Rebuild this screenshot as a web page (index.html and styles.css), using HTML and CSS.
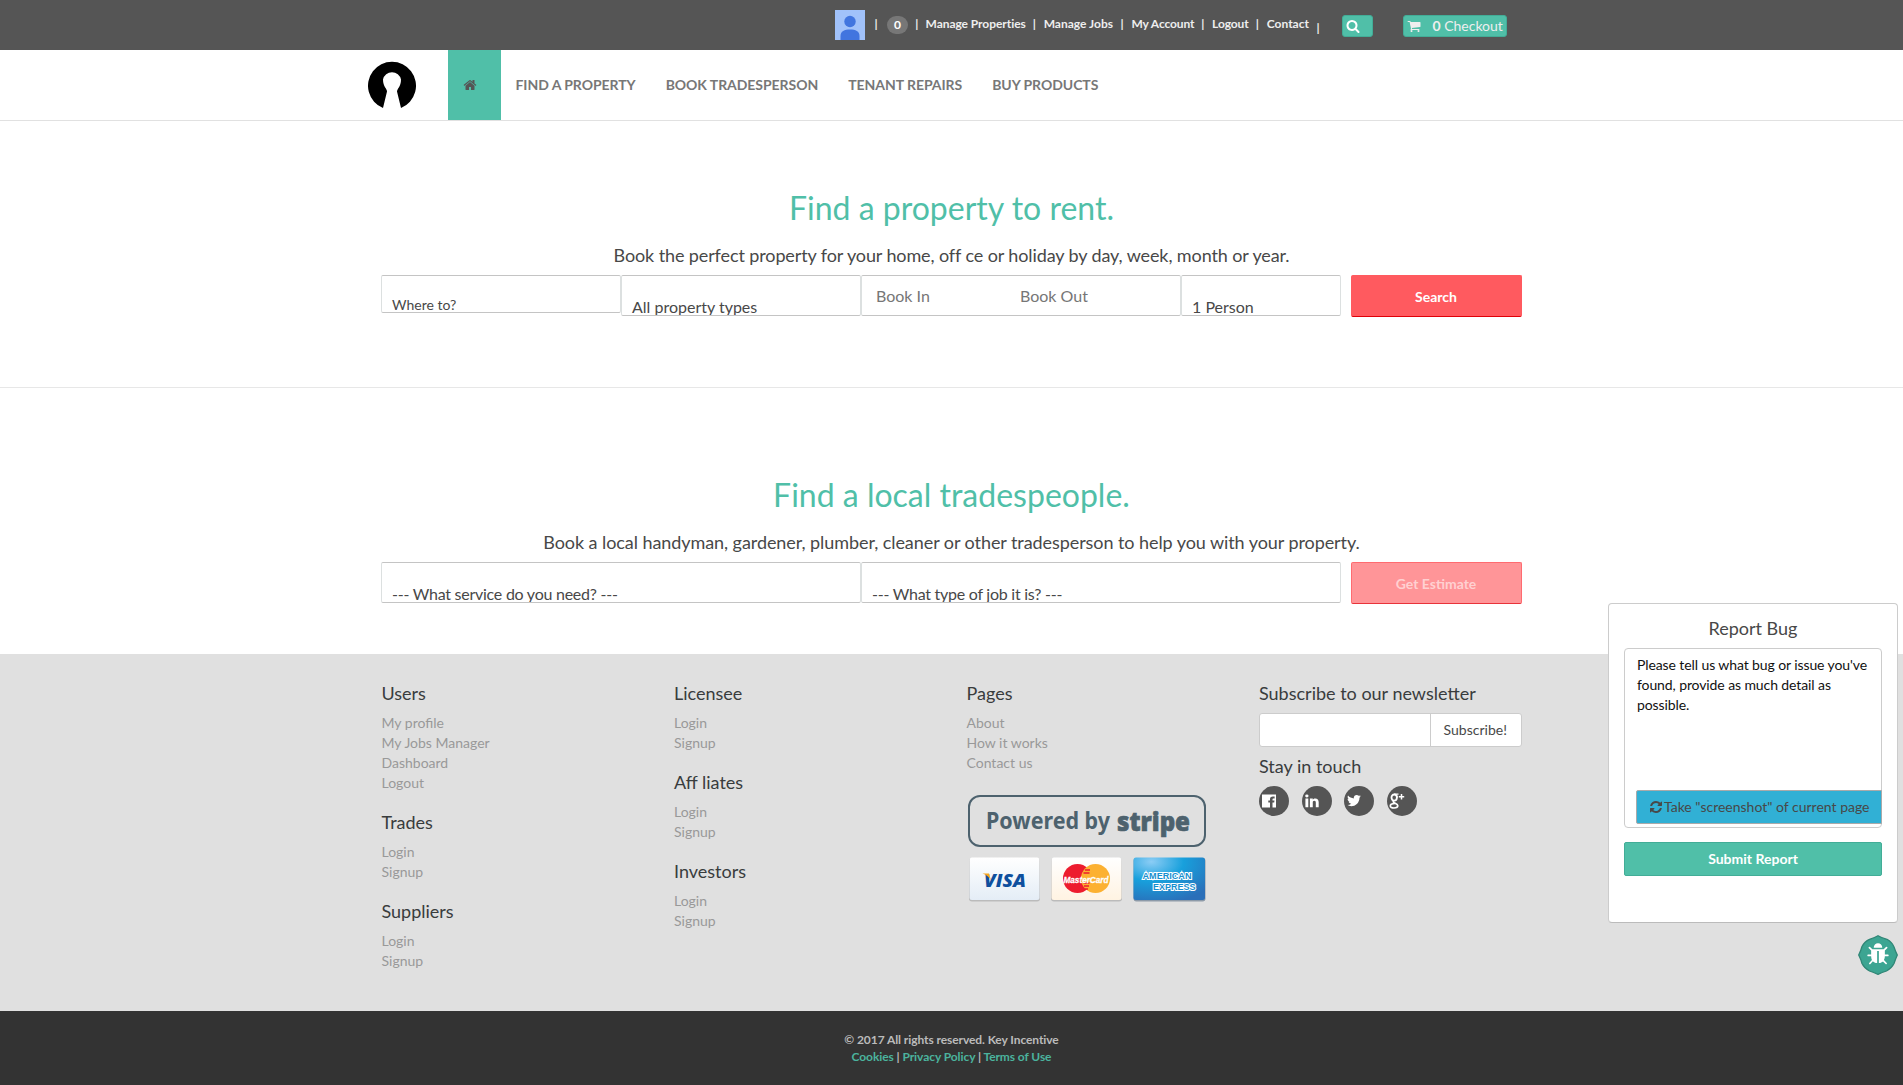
FILE: index.html
```html
<!DOCTYPE html>
<html lang="en">
<head>
<meta charset="utf-8">
<title>Key Incentive</title>
<link rel="stylesheet" href="styles.css">
</head>
<body>
<div class="topbar">
  <svg class="avatar" viewBox="0 0 30 30"><rect width="30" height="30" fill="#a1c2fa"/><circle cx="15" cy="11.5" r="5.7" fill="#4175df"/><path d="M5.500 30v-4c0-5 4-6.500 9.500-6.500s9.500 1.500 9.500 6.500v4z" fill="#4175df"/></svg>
  <span class="sep">|</span>
  <span class="count">0</span>
  <span class="sep">|</span>
  <a class="t-props">Manage Properties</a><span class="sep">|</span>
  <a class="t-jobs">Manage Jobs</a><span class="sep">|</span>
  <a class="t-account">My Account</a><span class="sep">|</span>
  <a class="t-logout">Logout</a><span class="sep">|</span>
  <a class="t-contact">Contact</a><span class="sep low">|</span>
  <a class="pill find"><svg viewBox="0 0 1792 1792"><path d="M1216 832q0-185-131.500-316.500t-316.500-131.500-316.500 131.500-131.500 316.500 131.500 316.500 316.500 131.500 316.500-131.500 131.500-316.500zm512 832q0 52-38 90t-90 38q-54 0-90-38l-343-342q-179 124-399 124-143 0-273.500-55.500t-225-150-150-225-55.500-273.500 55.500-273.500 150-225 225-150 273.500-55.500 273.500 55.500 225 150 150 225 55.500 273.500q0 220-124 399l343 343q37 37 37 90z"/></svg></a>
  <a class="pill cart"><svg viewBox="0 0 1792 1792"><path d="M704 1536q0 52-38 90t-90 38-90-38-38-90 38-90 90-38 90 38 38 90zm896 0q0 52-38 90t-90 38-90-38-38-90 38-90 90-38 90 38 38 90zm128-1088v512q0 24-16.500 42.500t-40.500 21.500l-1044 122q13 60 13 70 0 16-24 64h920q26 0 45 19t19 45-19 45-45 19h-1024q-26 0-45-19t-19-45q0-11 8-31.500t16-36 21.500-40 15.500-29.500l-177-823h-204q-26 0-45-19t-19-45 19-45 45-19h256q16 0 28.500 6.500t19.500 15.500 13 24.500 8 26 5.500 29.500 4.500 26h1201q26 0 45 19t19 45z"/></svg><span><b>0</b> Checkout</span></a>
</div>
<header class="header">
  <svg class="logo" viewBox="0 0 48 48"><path fill="#000" d="M15 47A24 24 0 1 1 33 47L29 30.500C29 27.500 33 26 33 18.500A9.200 9.200 0 0 0 15 18.500C15 26 19 27.500 19 30.500z"/></svg>
  <nav class="nav">
    <a class="home"><svg viewBox="0 0 1792 1792"><path d="M1472 992v480q0 26-19 45t-45 19h-384v-384h-256v384h-384q-26 0-45-19t-19-45v-480q0-1 .5-3t.5-3l575-474 575 474q1 2 1 6zm223-69l-62 74q-8 9-21 11h-3q-13 0-21-7l-692-577-692 577q-12 8-24 7-13-2-21-11l-62-74q-8-10-7-23.500t11-21.500l719-599q32-26 76-26t76 26l244 204v-195q0-14 9-23t23-9h192q14 0 23 9t9 23v408l219 182q10 8 11 21.500t-7 23.500z"/></svg></a>
    <a>FIND A PROPERTY</a><a>BOOK TRADESPERSON</a><a>TENANT REPAIRS</a><a>BUY PRODUCTS</a>
  </nav>
</header>
<main>
  <section class="hero rent">
    <h1>Find a property to rent.</h1>
    <p>Book the perfect property for your home, off ce or holiday by day, week, month or year.</p>
    <form class="row">
      <div class="field where"><span>Where to?</span></div>
      <div class="field types"><span>All property types</span></div>
      <div class="field dates"><span>Book In</span><span>Book Out</span></div>
      <div class="field people"><span>1 Person</span></div>
      <button type="button" class="go">Search</button>
    </form>
  </section>
  <section class="hero trades">
    <h1>Find a local tradespeople.</h1>
    <p>Book a local handyman, gardener, plumber, cleaner or other tradesperson to help you with your property.</p>
    <form class="row">
      <div class="field wide"><span>--- What service do you need? ---</span></div>
      <div class="field wide"><span>--- What type of job it is? ---</span></div>
      <button type="button" class="go off">Get Estimate</button>
    </form>
  </section>
</main>
<footer class="footer">
  <div class="col">
    <h4>Users</h4><ul><li>My profile</li><li>My Jobs Manager</li><li>Dashboard</li><li>Logout</li></ul>
    <h4>Trades</h4><ul><li>Login</li><li>Signup</li></ul>
    <h4>Suppliers</h4><ul><li>Login</li><li>Signup</li></ul>
  </div>
  <div class="col">
    <h4>Licensee</h4><ul><li>Login</li><li>Signup</li></ul>
    <h4>Aff liates</h4><ul><li>Login</li><li>Signup</li></ul>
    <h4>Investors</h4><ul><li>Login</li><li>Signup</li></ul>
  </div>
  <div class="col">
    <h4>Pages</h4><ul><li>About</li><li>How it works</li><li>Contact us</li></ul>
    <svg class="pay" width="240" height="108" viewBox="0 0 240 108">
      <defs>
        <linearGradient id="v" x2="0" y2="1"><stop stop-color="#fff"/><stop offset="1" stop-color="#e4edf6"/></linearGradient>
        <linearGradient id="m" x2="0" y2="1"><stop stop-color="#fff"/><stop offset="1" stop-color="#fff3e2"/></linearGradient>
        <radialGradient id="a" cx=".25" cy=".1" r="1"><stop stop-color="#8ccdf5"/><stop offset=".45" stop-color="#18a0dc"/><stop offset="1" stop-color="#2a6fb9"/></radialGradient>
      </defs>
      <rect x="3" y="1" width="236" height="50" rx="11" fill="none" stroke="#4d626e" stroke-width="2"/>
      <text x="20" y="34" textLength="124" lengthAdjust="spacingAndGlyphs" class="powered">Powered by</text>
      <text x="151" y="36" textLength="73" lengthAdjust="spacingAndGlyphs" class="stripe">stripe</text>
      <rect x="3" y="63" width="71" height="43.500" rx="3" fill="#bbb"/>
      <rect x="3.500" y="62.500" width="70" height="42.500" rx="2.500" fill="url(#v)"/>
      <text x="18" y="91.500" textLength="42" lengthAdjust="spacingAndGlyphs" class="visa">VISA</text>
      <path d="M16.500 78.500h6.500l2 7c-1.500-3-4-5.500-8.500-7z" fill="#f8a51b"/>
      <rect x="85" y="63" width="71" height="43.500" rx="3" fill="#bbb"/>
      <rect x="85.500" y="62.500" width="70" height="42.500" rx="2.500" fill="url(#m)"/>
      <circle cx="111.500" cy="83.500" r="14.500" fill="#ed1c2e"/><circle cx="129.500" cy="83.500" r="14.500" fill="#fcb131"/>
      <path d="M119 75h5M117.500 78h6M117.500 88h6M118 91h5M119 94h3" stroke="#ed1c2e" stroke-width="1.500"/>
      <text x="97.500" y="88" textLength="45" lengthAdjust="spacingAndGlyphs" class="mc">MasterCard</text>
      <rect x="167.500" y="63" width="72" height="43.500" rx="3" fill="#8d9aa8"/>
      <rect x="167.500" y="62.500" width="71.500" height="42.500" rx="2.500" fill="url(#a)"/>
      <text x="176.500" y="84" textLength="49" lengthAdjust="spacingAndGlyphs" class="amex">AMERICAN</text>
      <text x="187" y="94.500" textLength="42.500" lengthAdjust="spacingAndGlyphs" class="amex">EXPRESS</text>
    </svg>
  </div>
  <div class="col">
    <h4>Subscribe to our newsletter</h4>
    <div class="news"><div class="input"></div><div class="sub">Subscribe!</div></div>
    <h4 class="touch">Stay in touch</h4>
    <div class="social">
      <a><svg viewBox="0 0 14 14"><path fill-rule="evenodd" d="M0 .5h14v13h-3.500V8.600h1.700l.3-2h-2V5.400c0-.7.3-1 1-1h1.100V2.500h-1.700C9 2.500 8 3.500 8 5.200v1.400H6.300v2H8v4.900H0z"/></svg></a>
      <a><svg viewBox="100 100 1600 1600"><path d="M477 625v991h-330v-991h330zm21-306q1 73-50.500 122t-135.500 49h-2q-82 0-132-49t-50-122q0-74 51.500-122.500t134.500-48.500 133 48.500 51 122.500zm1166 729v568h-329v-530q0-105-40.500-164.500t-126.500-59.500q-63 0-105.500 34.500t-63.500 85.500q-11 30-11 81v553h-329q2-399 2-647t-1-296l-1-48h329v144h-2q20-32 41-56t56.500-52 87-43.500 114.500-15.500q171 0 275 113.500t104 332.500z"/></svg></a>
      <a><svg viewBox="100 150 1600 1600"><path d="M1684 408q-67 98-162 167 1 14 1 42 0 130-38 259.500t-115.500 248.500-184.500 210.500-258 146-323 54.500q-271 0-496-145 35 4 78 4 225 0 401-138-105-2-188-64.500t-114-159.500q33 5 61 5 43 0 85-11-112-23-185.500-111.500t-73.500-205.500v-4q68 38 146 41-66-44-105-115t-39-154q0-88 44-163 121 149 294.500 238.500t371.500 99.500q-8-38-8-74 0-134 94.500-228.500t228.500-94.500q140 0 236 102 109-21 205-78-37 115-142 178 93-10 186-50z"/></svg></a>
      <a><svg class="gplus" viewBox="0 0 16 16"><g fill="none" stroke="#fff"><ellipse cx="5.200" cy="4.600" rx="2.700" ry="3.100" stroke-width="1.800"/><path d="M5 1.200h4.500M7.500 2.500l1 2" stroke-width="1.200"/><path d="M5 7.800c-1.500 1.200-.4 1.800 1.200 2.500 1.700.8 2.600 1.600 2.600 2.500 0 1.400-1.700 2.200-3.800 2.200S1.300 14.200 1.300 12.900c0-1.600 2-2.400 4.500-2.600" stroke-width="1.700"/><path d="M12.500 1v5.400M9.800 3.700h5.400" stroke-width="1.500"/></g></svg></a>
    </div>
  </div>
</footer>
<div class="legal">
  <div class="l1">© 2017 All rights reserved. Key Incentive</div>
  <div class="l2"><a>Cookies</a> | <a>Privacy Policy</a> | <a>Terms of Use</a></div>
</div>
<aside class="report">
  <h4>Report Bug</h4>
  <div class="message">
    <p>Please tell us what bug or issue you've<br>found, provide as much detail as<br>possible.</p>
    <button type="button" class="shot"><svg viewBox="0 0 1792 1792"><path d="M1639 1056q0 5-1 7-64 268-268 434.500t-478 166.500q-146 0-282.500-55t-243.500-157l-129 129q-19 19-45 19t-45-19-19-45v-448q0-26 19-45t45-19h448q26 0 45 19t19 45-19 45l-137 137q71 66 161 102t187 36q134 0 250-65t186-179q11-17 53-117 8-23 30-23h192q13 0 22.500 9.500t9.500 22.500zm25-800v448q0 26-19 45t-45 19h-448q-26 0-45-19t-19-45 19-45l138-138q-148-137-349-137-134 0-250 65t-186 179q-11 17-53 117-8 23-30 23h-199q-13 0-22.500-9.500t-9.500-22.500v-7q65-268 270-434.500t480-166.500q146 0 284 55.500t245 156.500l130-129q19-19 45-19t45 19 19 45z"/></svg><span>Take "screenshot" of current page</span></button>
  </div>
  <button type="button" class="submit">Submit Report</button>
</aside>
<svg class="bug" viewBox="0 0 40 40"><path d="M20 .7Q24.500 3.300 29 4.300Q34 7 36 12Q37.500 16.500 39.300 20Q37.500 24 36 28.500Q33.500 33.500 28.500 36Q24 37.500 20 39.300Q15.500 37.500 11.500 36Q6.500 33.500 4 28.500Q3 24.500 .7 20Q3 15.500 4 11.500Q6.500 6.500 11.500 4.300Q15.500 3.300 20 .7z" fill="#3ca592" stroke="#308676" stroke-width="1.300"/><svg x="8" y="7.500" width="24" height="24" viewBox="0 0 1792 1792"><path fill="#fff" d="M1696 960q0 26-19 45t-45 19h-224q0 171-67 290l208 209q19 19 19 45t-19 45q-18 19-45 19t-45-19l-198-197q-5 5-15 13t-42 28.500-65 36.500-82 29-97 13v-896h-128v896q-51 0-101.500-13.500t-87-33-66-39-43.500-32.500l-15-14-183 207q-20 21-48 21-24 0-43-16-19-18-20.500-44.500t15.500-46.500l202-227q-58-114-58-274h-224q-26 0-45-19t-19-45 19-45 45-19h224v-294l-173-173q-19-19-19-45t19-45 45-19 45 19l173 173h844l173-173q19-19 45-19t45 19 19 45-19 45l-173 173v294h224q26 0 45 19t19 45zm-480-576h-640q0-133 93.500-226.500t226.500-93.500 226.500 93.500 93.500 226.500z"/></svg></svg>
</body>
</html>
```
FILE: styles.css
```css
* { box-sizing: border-box; }
body { margin: 0; font: 14px/20px Lato, sans-serif; color: #484848; background: #fff; overflow: hidden; }
h1, h4, p, ul, form { margin: 0; padding: 0; font-weight: 400; }
ul { list-style: none; }
button { font: inherit; padding: 0; margin: 0; }
span, a { white-space: nowrap; }

.topbar { height: 50px; background: #555; color: #eee; font-size: 12px; font-weight: 700; display: flex; align-items: flex-start; padding: 10px 0 0 835px; line-height: 28px; }
.avatar { width: 30px; height: 30px; flex: none; }
.sep { width: 18.700px; text-align: center; flex: none; }
.avatar + .sep { width: 22px; }
.count + .sep { width: 17.500px; }
.low { padding-top: 4px; }
.count { width: 21px; height: 18px; margin-top: 6px; border-radius: 9px; background: #777; color: #fff; line-height: 18px; text-align: center; }
.t-props { width: 99.500px; letter-spacing: -.05px; }
.t-jobs { width: 69px; }
.t-account { width: 62px; letter-spacing: -.1px; }
.t-logout { width: 36px; letter-spacing: -.1px; }
.t-contact { width: 42px; }
.pill { height: 22px; margin-top: 5px; background: #50bfa8; border: 1px solid #42ad97; border-radius: 3px; color: #eee; font-size: 14px; font-weight: 400; line-height: 20px; display: flex; align-items: center; }
.pill svg { width: 14px; height: 14px; fill: #fff; }
.find { width: 31px; margin-left: 15px; padding-left: 3px; }
.cart { width: 104px; margin-left: 30px; padding-left: 3px; }
.cart svg { fill: #eee; }
.cart span { margin-left: 11px; }

.header { height: 71px; border-bottom: 1px solid #e1e1e1; display: flex; padding-left: 368px; }
.logo { width: 48px; height: 48px; margin: 11px 31.500px 0 0; }
.nav { display: flex; line-height: 70px; font-weight: 700; color: #777; letter-spacing: -.05px; }
.nav a { padding: 0 15px; }
.nav .home { width: 53px; height: 70px; background: #50bfa8; display: flex; align-items: center; }
.home svg { width: 14px; height: 14px; fill: #555; }

.hero { width: 1140px; margin: 0 auto; text-align: center; }
.rent { height: 267px; padding-top: 67px; }
.rent::after { content: ""; display: block; width: 1903px; height: 1px; margin: 70px 0 0 -381.500px; background: #e7e7e7; }
.trades { height: 266px; padding-top: 87px; }
.hero h1 { font-size: 32px; line-height: 40px; color: #50bfa8; }
.hero p { font-size: 18px; line-height: 26px; margin-top: 14px; letter-spacing: -.11px; }
.trades p { letter-spacing: -.07px; }
.row { display: flex; height: 42px; margin: 7px 0 0 -.5px; text-align: left; align-items: flex-start; }
.field { height: 41px; border: 1px solid #c4c4c4; border-left-color: #dce0e0; border-right-color: #dce0e0; border-radius: 2px; background: #fff; width: 160px; padding: 21px 0 0 10px; font-size: 16px; overflow: hidden; flex: none; }
.where { height: 38px; width: 240px; font-size: 14px; padding-top: 19px; }
.types { width: 240px; }
.dates { width: 320px; padding: 10px 0 0 14px; display: flex; color: #767676; }
.dates span { width: 144px; }
.wide { width: 480px; letter-spacing: -.25px; }
.go { width: 171px; height: 42px; margin-left: 9.500px; background: #ff5a5f; border: 1px solid #ff5a5f; border-bottom: 1px solid #e00007; border-radius: 2px; color: #fff; font-weight: 700; padding-top: 1px; }
.off { background: #ff9598; border-color: #ff6b70; border-bottom-color: #e8333a; color: #ffd0d1; }

.footer { height: 357px; padding: 30px 381.500px 0; background: #e0e0e0; display: grid; grid-template-columns: repeat(4, 292.500px); }
.footer h4 { font-size: 18px; line-height: 18px; height: 19px; color: #393c3d; white-space: nowrap; }
.footer ul { margin: 10px 0 20px; color: #999; }
.pay { display: block; margin: 22px 0 0 -.5px; }
.powered { font: 700 22.500px "Noto Sans"; fill: #4d626e; }
.stripe { font: 800 27px "Open Sans"; fill: #4d626e; stroke: #4d626e; stroke-width: .7px; }
.visa { font: italic 800 18px "Open Sans"; fill: #0e4f9e; }
.mc { font: italic 700 9.500px "Liberation Sans"; fill: #fff; stroke: #fff; stroke-width: .3px; }
.amex { font: 700 9px "Liberation Sans"; fill: #168fd0; stroke: #fff; stroke-width: 2px; paint-order: stroke; }
.news { display: flex; width: 262.500px; height: 34px; margin-top: 10px; border: 1px solid #ccc; border-radius: 3px; background: #fff; }
.input { width: 171px; border-right: 1px solid #ccc; }
.sub { flex: 1; line-height: 32px; text-align: center; padding-right: 1px; }
.footer .touch { margin-top: 10px; }
.social { display: flex; gap: 12.700px; margin-top: 10px; }
.social a { width: 30px; height: 30px; border-radius: 50%; background: #555; }
.social svg { display: block; width: 14px; height: 14px; margin: 8px 0 0 3px; fill: #fff; }
.social .gplus { width: 16px; height: 16px; margin: 7px 0 0 2px; }

.legal { height: 74px; background: #333; padding-top: 20px; text-align: center; font-size: 12px; line-height: 17px; font-weight: 700; color: #bbb; letter-spacing: -.08px; }
.legal a { color: #4bb39e; }

.report { position: absolute; left: 1608px; top: 603px; width: 290px; height: 320px; padding: 14px 15px; border: 1px solid #ccc; border-bottom-color: #bbb; border-radius: 4px; background: #fff; }
.report h4 { font-size: 18px; line-height: 20px; text-align: center; margin-bottom: 10px; }
.message { display: flex; flex-direction: column; align-items: flex-end; justify-content: space-between; height: 180px; border: 1px solid #ccc; border-radius: 4px; padding: 6px 0 3px; color: #111; }
.message p { width: 244px; letter-spacing: -.1px; }
.shot { width: 246px; height: 34px; margin-right: -1px; background: #31b0d5; border: 1px solid #aaa; border-radius: 2px 0 0 2px; color: #484848; display: flex; align-items: center; padding-left: 12px; gap: 1px; }
.shot svg { width: 14px; height: 14px; fill: #484848; }
.submit { display: block; width: 258px; height: 34px; margin-top: 14px; background: #50bfa8; border: 1px solid #42ad97; border-radius: 2px; color: #fff; font-weight: 700; }
.bug { position: absolute; left: 1858px; top: 935px; width: 40px; height: 40px; }
```
